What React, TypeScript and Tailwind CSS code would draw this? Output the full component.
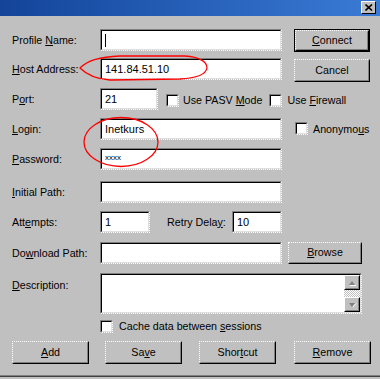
import type { ReactNode } from "react";

function Field({ className, children }: { className: string; children?: ReactNode }) {
  return (
    <div
      className={`border border-t-[#808080] border-l-[#808080] border-r-white border-b-white [border-right-style:dotted] [border-bottom-style:dotted] ${className}`}
    >
      <div className="h-full border border-t-black border-l-black border-r-[#dfdfdf] border-b-[#dfdfdf] bg-white pl-[1px] flex items-center text-[11px] text-black">
        {children}
      </div>
    </div>
  );
}

function Btn({ className, children, isDefault }: { className: string; children: ReactNode; isDefault?: boolean }) {
  const raised = (
    <div className="h-full border border-t-white border-l-white border-r-black border-b-black [border-top-style:dotted] [border-left-style:dotted]">
      <div className="h-full border border-t-[#c0c0c0] border-l-[#c0c0c0] border-r-[#808080] border-b-[#808080] flex items-center justify-center pb-[1px]">
        {children}
      </div>
    </div>
  );
  if (isDefault) {
    return <div className={`border border-black ${className}`}>{raised}</div>;
  }
  return <div className={className}>{raised}</div>;
}

function Check() {
  return (
    <div className="w-[13px] h-[13px] shrink-0 border border-t-[#808080] border-l-[#808080] border-r-white border-b-white [border-right-style:dotted] [border-bottom-style:dotted]">
      <div className="h-full border border-t-black border-l-black border-r-[#dfdfdf] border-b-[#dfdfdf] bg-white" />
    </div>
  );
}

function Label({ children, className = "" }: { children: ReactNode; className?: string }) {
  return <div className={`w-[88px] shrink-0 ${className}`}>{children}</div>;
}

function ScrollBtn({ up }: { up?: boolean }) {
  return (
    <div className="h-[15px] border border-t-white border-l-white border-r-black border-b-black">
      <div className="h-full border border-t-[#c0c0c0] border-l-[#c0c0c0] border-r-[#808080] border-b-[#808080] bg-[#c0c0c0] flex items-center justify-center">
        <svg width="9" height="6" viewBox="0 0 9 6">
          {up ? (
            <>
              <polygon points="1,5 4,1 7,5" fill="#808080" />
              <line x1="2" y1="5.5" x2="8" y2="5.5" stroke="#ffffff" strokeWidth="1" />
            </>
          ) : (
            <>
              <polygon points="1,1 7,1 4,5" fill="#808080" />
              <line x1="5" y1="5" x2="8" y2="1.5" stroke="#ffffff" strokeWidth="1" />
            </>
          )}
        </svg>
      </div>
    </div>
  );
}

export default function App() {
  return (
    <div className="relative w-[380px] h-[379px] bg-[#c0c0c0] overflow-hidden font-['Liberation_Sans',Arial,sans-serif] text-[10.7px] text-black leading-none">
      {/* Title bar */}
      <div className="h-[16px] bg-gradient-to-r from-[#13449a] to-[#3a7bd6] flex justify-end items-start pr-[4px] pt-[1px]">
        <div className="w-[15px] h-[13px] border border-t-white border-l-white border-r-black border-b-black bg-[#c0c0c0] flex items-center justify-center">
          <svg width="8" height="7" viewBox="0 0 8 7">
            <path d="M0.5 0.5 L7 6.5 M7 0.5 L0.5 6.5" stroke="#000" strokeWidth="1.6" />
          </svg>
        </div>
      </div>

      <div className="pl-[12px]">
        {/* Profile Name */}
        <div className="mt-[13px] h-[22px] flex items-center">
          <Label>
            Profile <u>N</u>ame:
          </Label>
          <Field className="w-[182px] h-[22px]">
            <div className="ml-[2px] w-px h-[13px] bg-black" />
          </Field>
          <Btn isDefault className="ml-[12px] w-[76px] h-[23px] self-start">
            <span>
              <u>C</u>onnect
            </span>
          </Btn>
        </div>

        {/* Host Address */}
        <div className="mt-[7px] h-[22px] flex items-center">
          <Label>
            <u>H</u>ost Address:
          </Label>
          <Field className="w-[182px] h-[22px]">
            <span className="ml-[2px]">141.84.51.10</span>
          </Field>
          <Btn className="ml-[12px] w-[76px] h-[23px] self-start mt-[1px]">
            <span>Cancel</span>
          </Btn>
        </div>

        {/* Port */}
        <div className="mt-[8px] h-[22px] flex items-center">
          <Label>
            P<u>o</u>rt:
          </Label>
          <Field className="w-[58px] h-[22px]">
            <span className="ml-[2px]">21</span>
          </Field>
          <div className="ml-[8px] mt-[3px]">
            <Check />
          </div>
          <span className="ml-[4px] mt-[2px]">
            Use PASV <u>M</u>ode
          </span>
          <div className="ml-[7px] mt-[3px]">
            <Check />
          </div>
          <span className="ml-[5px] mt-[2px]">
            Use <u>F</u>irewall
          </span>
        </div>

        {/* Login */}
        <div className="mt-[8px] h-[22px] flex items-start">
          <Label className="self-center">
            <u>L</u>ogin:
          </Label>
          <Field className="w-[182px] h-[22px]">
            <span className="ml-[2px]">Inetkurs</span>
          </Field>
          <div className="ml-[13px] mt-[4px]">
            <Check />
          </div>
          <span className="ml-[5px] mt-[6px]">
            Anonymo<u>u</u>s
          </span>
        </div>

        {/* Password */}
        <div className="mt-[8px] h-[22px] flex items-center">
          <Label>
            <u>P</u>assword:
          </Label>
          <Field className="w-[182px] h-[22px]">
            <span className="ml-[2px] text-[8px] mb-[2px]">xxxx</span>
          </Field>
        </div>

        {/* Initial Path */}
        <div className="mt-[11px] h-[22px] flex items-center">
          <Label>
            <u>I</u>nitial Path:
          </Label>
          <Field className="w-[182px] h-[22px]" />
        </div>

        {/* Attempts / Retry Delay */}
        <div className="mt-[8px] h-[22px] flex items-center">
          <Label>
            Att<u>e</u>mpts:
          </Label>
          <Field className="w-[50px] h-[22px]">
            <span className="ml-[2px]">1</span>
          </Field>
          <span className="ml-[17px] w-[65px]">
            Retry Dela<u>y</u>:
          </span>
          <Field className="w-[50px] h-[22px]">
            <span className="ml-[2px]">10</span>
          </Field>
        </div>

        {/* Download Path */}
        <div className="mt-[9px] h-[22px] flex items-center">
          <Label>
            Do<u>w</u>nload Path:
          </Label>
          <Field className="w-[182px] h-[22px]" />
          <Btn className="ml-[6px] w-[74px] h-[22px]">
            <span>
              <u>B</u>rowse
            </span>
          </Btn>
        </div>

        {/* Description */}
        <div className="mt-[9px] h-[41px] flex items-start">
          <Label className="pt-[7px]">
            <u>D</u>escription:
          </Label>
          <div className="w-[262px] h-[41px] border border-t-[#808080] border-l-[#808080] border-r-white border-b-white [border-right-style:dotted] [border-bottom-style:dotted]">
            <div className="h-full border border-t-black border-l-black border-r-[#dfdfdf] border-b-[#dfdfdf] bg-white flex justify-end">
              <div className="w-[16px] flex flex-col">
                <ScrollBtn up />
                <div className="flex-1 bg-[repeating-conic-gradient(#ffffff_0_25%,#c0c0c0_0_50%)] bg-[length:2px_2px]" />
                <ScrollBtn />
              </div>
            </div>
          </div>
        </div>

        {/* Cache checkbox */}
        <div className="mt-[6px] h-[13px] flex items-center">
          <div className="w-[88px] shrink-0" />
          <Check />
          <span className="ml-[6px]">
            Cache data between <u>s</u>essions
          </span>
        </div>

        {/* Bottom buttons */}
        <div className="mt-[8px] h-[23px] flex">
          <Btn className="w-[77px] h-[23px]">
            <span>
              <u>A</u>dd
            </span>
          </Btn>
          <Btn className="ml-[16px] w-[77px] h-[23px]">
            <span>
              Sa<u>v</u>e
            </span>
          </Btn>
          <Btn className="ml-[17px] w-[77px] h-[23px]">
            <span>
              Shor<u>t</u>cut
            </span>
          </Btn>
          <Btn className="ml-[18px] w-[77px] h-[23px]">
            <span>
              <u>R</u>emove
            </span>
          </Btn>
        </div>
      </div>

      {/* window bottom edge */}
      <div className="mt-[11px] h-px bg-[#808080]" />
      <div className="h-px bg-[#404040]" />

      {/* red hand-drawn annotations */}
      <svg className="absolute left-0 top-0 pointer-events-none" width="380" height="379" viewBox="0 0 380 379">
        <path
          d="M80 68 C 88 60, 100 57, 120 56 L 185 56 C 200 57, 207 62, 207 68 C 206 74, 198 78, 180 79 L 110 80 C 95 79, 86 74, 80 68 Z"
          fill="none"
          stroke="#ff0000"
          strokeWidth="1.3"
        />
        <ellipse cx="121" cy="142" rx="37" ry="24.5" fill="none" stroke="#ff0000" strokeWidth="1.3" />
      </svg>
    </div>
  );
}
